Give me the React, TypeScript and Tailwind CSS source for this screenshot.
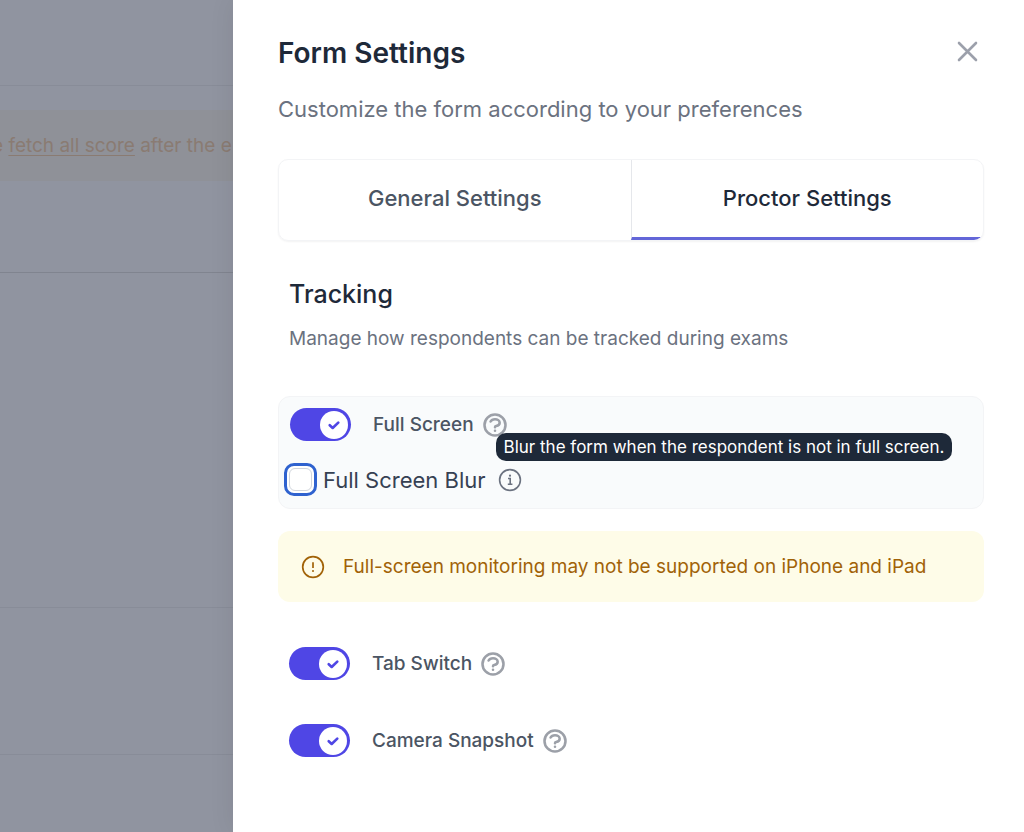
import { useState } from 'react';
import clsx from 'clsx';

type TrackingKey = 'fullScreen' | 'tabSwitch' | 'cameraSnapshot';

const TABS = ['General Settings', 'Proctor Settings'];

export default function App() {
  return (
    <div className="flex min-h-screen bg-[#9094a0] font-['Inter','Liberation_Sans',sans-serif]">
      <DimmedPage />
      <SettingsDrawer />
    </div>
  );
}

function DimmedPage() {
  return (
    <div className="flex w-[233px] shrink-0 flex-col overflow-hidden">
      <div className="h-[86px] border-b border-[#888c98]" />
      <div className="flex h-[187px] flex-col border-b border-[#80848f] pt-6">
        <div className="flex h-[71px] items-center bg-[#8f9198]">
          <p className="-ml-2 text-[19px] leading-[34px] whitespace-nowrap text-[#8a7b72]">
            e <a href="#scores" className="underline underline-offset-3">fetch all score</a> after the e
          </p>
        </div>
      </div>
      <div className="h-[335px] border-b border-[#888c98]" />
      <div className="h-[147px] border-b border-[#888c98]" />
    </div>
  );
}

function SettingsDrawer() {
  const [activeTab, setActiveTab] = useState('Proctor Settings');
  const [blur, setBlur] = useState(false);
  const [tracking, setTracking] = useState<Record<TrackingKey, boolean>>({
    fullScreen: true,
    tabSwitch: true,
    cameraSnapshot: true,
  });

  const toggle = (key: TrackingKey): void => {
    setTracking((prev) => ({ ...prev, [key]: !prev[key] }));
  };

  return (
    <aside className="flex flex-1 flex-col bg-white pr-10 pl-[45px] shadow-[0_0_24px_rgba(0,0,0,0.08)]">
      <header className="flex items-start justify-between pt-9">
        <div>
          <h1 className="text-[28px] leading-[34px] font-semibold text-gray-800">Form Settings</h1>
          <p className="mt-[22px] text-[22px] leading-[34px] text-[#6b7280]">
            Customize the form according to your preferences
          </p>
        </div>
        <button type="button" aria-label="Close" className="text-[#9ca0ab]">
          <svg viewBox="0 0 32 32" className="h-8 w-8" fill="none" stroke="currentColor" strokeWidth="2.6" strokeLinecap="round">
            <path d="M7 7 24 24M24 7 7 24" />
          </svg>
        </button>
      </header>

      <div role="tablist" className="mt-[33px] flex h-[82px] overflow-hidden rounded-[10px] border border-gray-100 shadow-xs">
        {TABS.map((tab) => (
          <button
            key={tab}
            type="button"
            role="tab"
            aria-selected={tab === activeTab}
            onClick={() => setActiveTab(tab)}
            className={clsx(
              'flex-1 border-b-3 text-[22px] font-medium not-first:border-l not-first:border-l-gray-200',
              tab === activeTab ? 'border-b-[#6366d8] text-gray-800' : 'border-b-transparent text-[#4b5563]',
            )}
          >
            {tab}
          </button>
        ))}
      </div>

      <section className="mt-[35px] flex flex-col">
        <h2 className="px-[11px] text-[25px] leading-9 font-medium text-gray-800">Tracking</h2>
        <p className="mt-2.5 px-[11px] text-[19px] leading-[34px] text-[#6b7280]">
          Manage how respondents can be tracked during exams
        </p>

        <div className="mt-10 rounded-xl border border-gray-100 bg-[#f9fbfc] px-[11px] pt-[11px] pb-3">
          <SwitchRow
            label="Full Screen"
            checked={tracking.fullScreen}
            onChange={() => toggle('fullScreen')}
          />
          <div className="mt-[22px] flex items-center">
            <label className="-ml-1.5 flex items-center gap-1.5 text-[22px] leading-8 text-gray-700">
              <span className="flex h-[33px] w-[33px] items-center justify-center rounded-[10px] border-3 border-[#2f62cf] bg-white">
                <input
                  type="checkbox"
                  checked={blur}
                  onChange={() => setBlur(!blur)}
                  className="h-[23px] w-[23px] appearance-none rounded-md border border-gray-300 bg-white checked:bg-[#4f46e5]"
                />
              </span>
              Full Screen Blur
            </label>
            <div className="relative ml-3 text-[#6b7280]">
              <InfoIcon />
              <div role="tooltip" className="absolute bottom-full -left-0.5 mb-[7px] h-7 rounded-[10px] bg-gray-800 px-2 text-[17px] leading-7 whitespace-nowrap text-white">
                Blur the form when the respondent is not in full screen.
              </div>
            </div>
          </div>
        </div>

        <div role="alert" className="mt-[22px] flex h-[71px] items-center gap-[18px] rounded-xl bg-[#fefce8] px-[23px] text-[19px] leading-[34px] text-[#a16207]">
          <AlertIcon />
          Full-screen monitoring may not be supported on iPhone and iPad
        </div>

        <div className="mt-[45px] flex flex-col gap-11 px-[11px]">
          <SwitchRow
            label="Tab Switch"
            checked={tracking.tabSwitch}
            onChange={() => toggle('tabSwitch')}
          />
          <SwitchRow
            label="Camera Snapshot"
            checked={tracking.cameraSnapshot}
            onChange={() => toggle('cameraSnapshot')}
          />
        </div>
      </section>
    </aside>
  );
}

interface SwitchRowProps {
  label: string;
  checked: boolean;
  onChange: () => void;
}

function SwitchRow({ label, checked, onChange }: SwitchRowProps) {
  return (
    <div className="flex h-[33px] items-center">
      <label className="flex items-center text-[19px] leading-[34px] font-medium text-[#4b5563]">
        <input type="checkbox" role="switch" checked={checked} onChange={onChange} className="sr-only" />
        <span
          className={clsx(
            'mr-[22px] flex h-[33px] w-[61px] items-center rounded-full px-[3px]',
            checked ? 'justify-end bg-[#4f46e5]' : 'bg-gray-200',
          )}
        >
          <span className="flex h-7 w-7 items-center justify-center rounded-full bg-white text-[#4f46e5]">
            {checked && (
              <svg viewBox="0 0 12 12" className="h-4 w-4" fill="none" stroke="currentColor" strokeWidth="2" strokeLinecap="round" strokeLinejoin="round">
                <path d="M2.8 6.2 5 8.2 9.2 4.2" />
              </svg>
            )}
          </span>
        </span>
        {label}
      </label>
      <HelpIcon />
    </div>
  );
}

function HelpIcon() {
  return (
    <svg viewBox="0 0 24 24" className="ml-[7px] h-7 w-7 text-[#9ca0a8]" fill="none" stroke="currentColor" strokeWidth="2.2" strokeLinecap="round" strokeLinejoin="round">
      <path d="M8.228 9c.549-1.165 2.03-2 3.772-2 2.21 0 4 1.343 4 3 0 1.4-1.278 2.575-3.006 2.907-.542.104-.994.54-.994 1.093m0 3h.01M21 12a9 9 0 11-18 0 9 9 0 0118 0z" />
    </svg>
  );
}

function InfoIcon() {
  return (
    <svg viewBox="0 0 24 24" className="h-6 w-6" fill="none" stroke="currentColor" strokeWidth="1.6">
      <circle cx="12" cy="12" r="10.4" />
      <path d="M10 10.5h2.2v5.6M9.8 16.3h4.6" />
      <circle cx="12" cy="7.7" r="1.1" fill="currentColor" stroke="none" />
    </svg>
  );
}

function AlertIcon() {
  return (
    <svg viewBox="0 0 24 24" className="h-6 w-6 shrink-0" fill="none" stroke="currentColor" strokeWidth="1.7">
      <circle cx="12" cy="12" r="10.3" />
      <path d="M12 7.3v5.6" />
      <circle cx="12" cy="16" r="1" fill="currentColor" stroke="none" />
    </svg>
  );
}
